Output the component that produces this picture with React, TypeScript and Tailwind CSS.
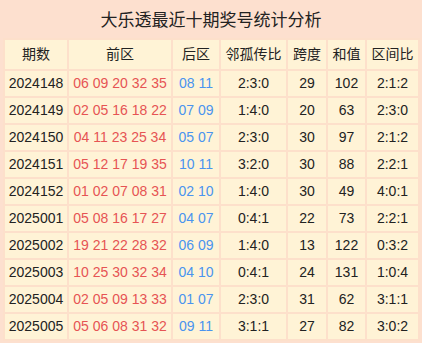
const rows = [
  ["2024148", "06 09 20 32 35", "08 11", "2:3:0", "29", "102", "2:1:2"],
  ["2024149", "02 05 16 18 22", "07 09", "1:4:0", "20", "63", "2:3:0"],
  ["2024150", "04 11 23 25 34", "05 07", "2:3:0", "30", "97", "2:1:2"],
  ["2024151", "05 12 17 19 35", "10 11", "3:2:0", "30", "88", "2:2:1"],
  ["2024152", "01 02 07 08 31", "02 10", "1:4:0", "30", "49", "4:0:1"],
  ["2025001", "05 08 16 17 27", "04 07", "0:4:1", "22", "73", "2:2:1"],
  ["2025002", "19 21 22 28 32", "06 09", "1:4:0", "13", "122", "0:3:2"],
  ["2025003", "10 25 30 32 34", "04 10", "0:4:1", "24", "131", "1:0:4"],
  ["2025004", "02 05 09 13 33", "01 07", "2:3:0", "31", "62", "3:1:1"],
  ["2025005", "05 06 08 31 32", "09 11", "3:1:1", "27", "82", "3:0:2"],
];

const headers = ["期数", "前区", "后区", "邻孤传比", "跨度", "和值", "区间比"];
const widths = ["w-[64px]", "w-[104px]", "w-[48px]", "w-[67px]", "w-[40px]", "w-[39px]", "w-[53px]"];

export default function App() {
  return (
    <div
      className="w-[422px] h-[343px] bg-[#fde0cf] px-[3px] pb-[4px] text-[#222]"
      style={{ fontFamily: '"Liberation Sans", Arial, "Noto Sans CJK SC", sans-serif' }}
    >
      <h1 className="h-[38px] pt-[3px] flex items-center justify-center text-[17px] text-[#222] font-normal">
        大乐透最近十期奖号统计分析
      </h1>
      <table className="w-[416px] table-fixed border-collapse bg-[#fff3d6] text-[14px]">
        <thead>
          <tr className="h-[31px]">
            {headers.map((h, i) => (
              <th
                key={h}
                className={`${widths[i]} border-2 border-[#fde0cb] font-normal text-center`}
              >
                {h}
              </th>
            ))}
          </tr>
        </thead>
        <tbody>
          {rows.map((r) => (
            <tr key={r[0]} className="h-[27px]">
              <td className="border-2 border-[#fde0cb] text-center">{r[0]}</td>
              <td className="border-2 border-[#fde0cb] text-center text-[#e65454]">{r[1]}</td>
              <td className="border-2 border-[#fde0cb] text-center text-[#4a94ef]">{r[2]}</td>
              <td className="border-2 border-[#fde0cb] text-center">{r[3]}</td>
              <td className="border-2 border-[#fde0cb] text-center">{r[4]}</td>
              <td className="border-2 border-[#fde0cb] text-center">{r[5]}</td>
              <td className="border-2 border-[#fde0cb] text-center">{r[6]}</td>
            </tr>
          ))}
        </tbody>
      </table>
    </div>
  );
}
